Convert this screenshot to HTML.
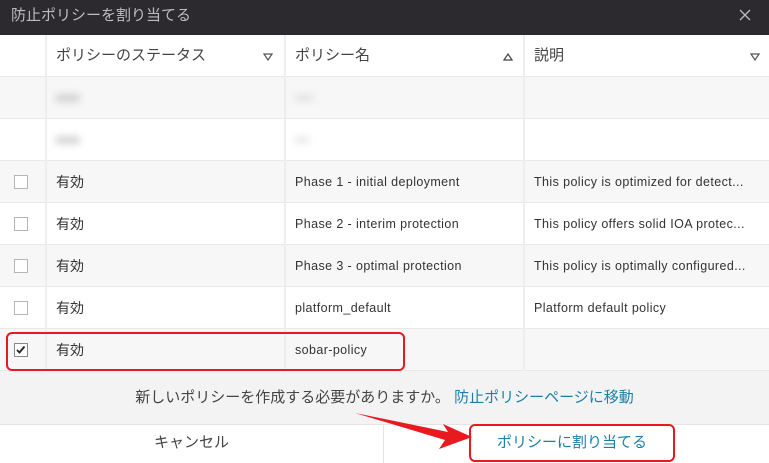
<!DOCTYPE html>
<html><head><meta charset="utf-8"><style>
*{margin:0;padding:0;box-sizing:border-box}
body{width:769px;height:463px;overflow:hidden;background:#fff;font-family:"Liberation Sans","Noto Sans CJK JP",sans-serif;position:relative;color:#333}
.title{position:absolute;left:0;top:0;width:769px;height:35px;background:#2c2a2f;color:#bdbdbd;font-size:15px;line-height:32px;padding-left:11px}
.x{position:absolute;right:18px;top:9px}
.row{position:absolute;left:0;width:769px;height:42px;border-bottom:1px solid #e8e8e8;font-size:14px}
.g{background:#f7f7f7}
.c{position:absolute;top:0;height:42px;line-height:42px}
.sep{position:absolute;top:35px;width:2px;height:336px;background:#eeeeee}
.cb{position:absolute;left:14px;top:14px;width:14px;height:14px;border:1.5px solid #b5b5b5;background:#fff}
.mono{font-size:12.5px;letter-spacing:.4px;color:#333}
.blur{filter:blur(4px);color:#bbb;font-size:13px}
</style></head><body>
<div class="title">防止ポリシーを割り当てる
<svg class="x" width="12" height="12" viewBox="0 0 12 12"><path d="M1 1L11 11M11 1L1 11" stroke="#bbb" stroke-width="1.3"/></svg></div>
<div class="row" style="top:35px;height:42px;background:#fff;font-size:15px;color:#444">
 <div class="c" style="left:56px">ポリシーのステータス</div>
 <svg style="position:absolute;left:263px;top:18px" width="10" height="8"><path d="M1 1H9L5 7Z" fill="none" stroke="#555" stroke-width="1.2"/></svg>
 <div class="c" style="left:295px">ポリシー名</div>
 <svg style="position:absolute;left:503px;top:18px" width="10" height="8"><path d="M1 7H9L5 1Z" fill="none" stroke="#444" stroke-width="1.2"/></svg>
 <div class="c" style="left:534px">説明</div>
 <svg style="position:absolute;left:750px;top:18px" width="10" height="8"><path d="M1 1H9L5 7Z" fill="none" stroke="#555" stroke-width="1.2"/></svg>
</div>
<div class="row g" style="top:77px"><div class="c blur" style="left:56px">■■■</div><div class="c blur" style="left:295px">▪▪▪▪</div></div>
<div class="row" style="top:119px"><div class="c blur" style="left:56px">■■■</div><div class="c blur" style="left:295px">▪▪▪</div></div>
<div class="row g" style="top:161px"><div class="cb"></div><div class="c" style="left:56px">有効</div><div class="c mono" style="left:295px">Phase 1 - initial deployment</div><div class="c mono" style="left:534px">This policy is optimized for detect...</div></div>
<div class="row" style="top:203px"><div class="cb"></div><div class="c" style="left:56px">有効</div><div class="c mono" style="left:295px">Phase 2 - interim protection</div><div class="c mono" style="left:534px">This policy offers solid IOA protec...</div></div>
<div class="row g" style="top:245px"><div class="cb"></div><div class="c" style="left:56px">有効</div><div class="c mono" style="left:295px">Phase 3 - optimal protection</div><div class="c mono" style="left:534px">This policy is optimally configured...</div></div>
<div class="row" style="top:287px"><div class="cb"></div><div class="c" style="left:56px">有効</div><div class="c mono" style="left:295px">platform_default</div><div class="c mono" style="left:534px">Platform default policy</div></div>
<div class="row g" style="top:329px"><div class="cb" style="border-color:#888"><svg width="11" height="11" style="position:absolute;left:0;top:0"><path d="M2 6L4.5 8.5L9.5 2.5" fill="none" stroke="#222" stroke-width="1.8"/></svg></div><div class="c" style="left:56px">有効</div><div class="c mono" style="left:295px">sobar-policy</div></div>
<div class="sep" style="left:45px"></div><div class="sep" style="left:284px"></div><div class="sep" style="left:523px"></div>
<div style="position:absolute;left:6px;top:332px;width:399px;height:39px;border:2px solid #e8191f;border-radius:6px"></div>
<div style="position:absolute;left:0;top:371px;width:769px;height:53px;background:#f3f3f3;font-size:15px;line-height:53px;text-align:center;color:#444;padding-left:0">新しいポリシーを作成する必要がありますか。 <span style="color:#1d7fa8">防止ポリシーページに移動</span></div>
<div style="position:absolute;left:0;top:424px;width:769px;height:39px;border-top:1px solid #e4e4e4;background:#fff"></div>
<div style="position:absolute;left:383px;top:424px;width:1px;height:39px;background:#e4e4e4"></div>
<div style="position:absolute;left:0;top:424px;width:383px;height:39px;line-height:38px;text-align:center;font-size:15px;color:#444">キャンセル</div>
<div style="position:absolute;left:469px;top:424px;width:206px;height:38px;border:2px solid #e8191f;border-radius:6px;line-height:34px;text-align:center;font-size:15px;color:#1d7fa8">ポリシーに割り当てる</div>
<svg style="position:absolute;left:350px;top:410px" width="130" height="40"><path d="M5 3L98 22L93 14L122 27L89 39L95 30Z" fill="#e8191f"/></svg>
</body></html>
